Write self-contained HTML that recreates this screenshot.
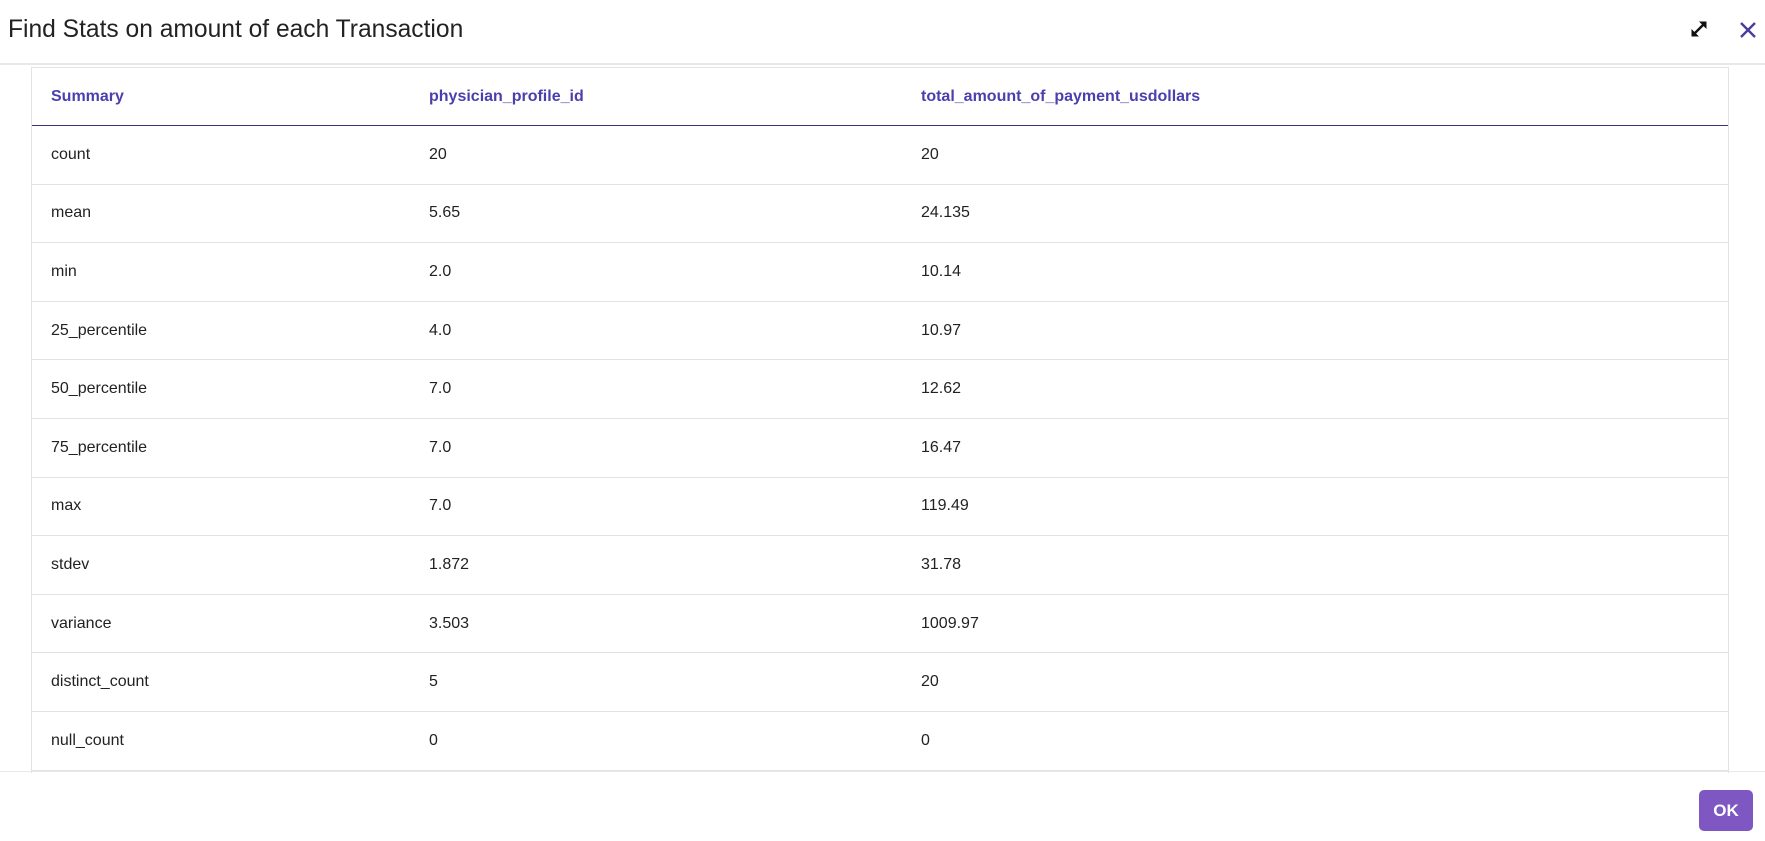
<!DOCTYPE html>
<html><head><style>
body{margin:0;width:1765px;height:841px;background:#fff;font-family:"Liberation Sans",Arial,sans-serif;position:relative;overflow:hidden}
.title{position:absolute;left:8px;top:16px;font-size:24.6px;color:#222}
.hdr{position:absolute;left:0;right:0;top:63px;border-top:2px solid #e6e8ee}
.tbl{position:absolute;left:31px;top:67px;width:1696px;height:705px;border-left:1px solid #e3e3e3;border-right:1px solid #e3e3e3;border-top:1px solid #e3e3e3;overflow:hidden}
.row{height:58.6px;border-bottom:1px solid #e2e2e2;position:relative;font-size:16px;color:#222;box-sizing:border-box}
.row span{position:absolute;top:50%;transform:translateY(-50%)}
.row.h{height:58px;border-bottom:1px solid #3b3477;color:#4b3fae;font-weight:bold}
.c1{left:19px}.c2{left:397px}.c3{left:889px}
.foot{position:absolute;left:0;right:0;top:771px;border-top:1px solid #e6e8ee}
.ok{position:absolute;left:1699px;top:790px;width:54px;height:41px;background:#7e57c2;border-radius:5px;color:#fff;font-weight:bold;font-size:17px;text-align:center;line-height:41px}
</style></head><body>
<div class="title">Find Stats on amount of each Transaction</div>
<svg style="position:absolute;left:1690px;top:20px" width="18" height="18" viewBox="0 0 18 18"><path d="M3 15L15 3" stroke="#111" stroke-width="2.4"/><path d="M9 1.5h7.5v7.5z M1.5 9v7.5h7.5z" fill="#111"/></svg>
<svg style="position:absolute;left:1738px;top:20px" width="20" height="20" viewBox="0 0 20 20"><path d="M3 3L17 17M17 3L3 17" stroke="#4a3d9a" stroke-width="2.4"/></svg>
<div class="hdr"></div>
<div class="tbl">
<div class="row h"><span class="c1">Summary</span><span class="c2">physician_profile_id</span><span class="c3">total_amount_of_payment_usdollars</span></div>
<div class="row"><span class="c1">count</span><span class="c2">20</span><span class="c3">20</span></div>
<div class="row"><span class="c1">mean</span><span class="c2">5.65</span><span class="c3">24.135</span></div>
<div class="row"><span class="c1">min</span><span class="c2">2.0</span><span class="c3">10.14</span></div>
<div class="row"><span class="c1">25_percentile</span><span class="c2">4.0</span><span class="c3">10.97</span></div>
<div class="row"><span class="c1">50_percentile</span><span class="c2">7.0</span><span class="c3">12.62</span></div>
<div class="row"><span class="c1">75_percentile</span><span class="c2">7.0</span><span class="c3">16.47</span></div>
<div class="row"><span class="c1">max</span><span class="c2">7.0</span><span class="c3">119.49</span></div>
<div class="row"><span class="c1">stdev</span><span class="c2">1.872</span><span class="c3">31.78</span></div>
<div class="row"><span class="c1">variance</span><span class="c2">3.503</span><span class="c3">1009.97</span></div>
<div class="row"><span class="c1">distinct_count</span><span class="c2">5</span><span class="c3">20</span></div>
<div class="row"><span class="c1">null_count</span><span class="c2">0</span><span class="c3">0</span></div>
</div>
<div class="foot"></div>
<div class="ok">OK</div>
</body></html>
